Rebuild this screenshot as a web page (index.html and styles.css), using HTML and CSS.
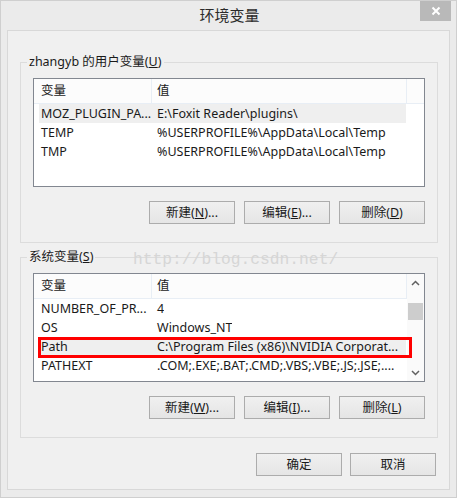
FILE: index.html
```html
<!DOCTYPE html>
<html lang="zh-CN">
<head>
<meta charset="utf-8">
<title>环境变量</title>
<link rel="stylesheet" href="styles.css">
</head>
<body>
<div class="window">
  <div class="titlebar">
    <div class="title">环境变量</div>
    <div class="close">
      <svg width="10" height="10" viewBox="0 0 10 10"><path d="M1.5 1.5 L8.5 8.5 M8.5 1.5 L1.5 8.5" stroke="#fff" stroke-width="2" fill="none"/></svg>
    </div>
  </div>
  <div class="panel">
    <div class="watermark">http://blog.csdn.net/</div>
    <fieldset class="group">
      <legend>zhangyb 的用户变量(<u>U</u>)</legend>
      <div class="list">
        <div class="list-body">
          <div class="list-head">
            <div class="h1">变量</div>
            <div class="h2">值</div>
          </div>
          <div class="row selected"><div class="c1">MOZ_PLUGIN_PA...</div><div class="c2">E:\Foxit Reader\plugins\</div></div>
          <div class="row"><div class="c1">TEMP</div><div class="c2">%USERPROFILE%\AppData\Local\Temp</div></div>
          <div class="row"><div class="c1">TMP</div><div class="c2">%USERPROFILE%\AppData\Local\Temp</div></div>
        </div>
      </div>
      <div class="buttons">
        <button class="btn">新建(<u>N</u>)...</button>
        <button class="btn">编辑(<u>E</u>)...</button>
        <button class="btn">删除(<u>D</u>)</button>
      </div>
    </fieldset>
    <fieldset class="group group2">
      <legend>系统变量(<u>S</u>)</legend>
      <div class="list">
        <div class="list-body">
          <div class="list-head">
            <div class="h1">变量</div>
            <div class="h2">值</div>
          </div>
          <div class="row"><div class="c1">NUMBER_OF_PR...</div><div class="c2">4</div></div>
          <div class="row"><div class="c1">OS</div><div class="c2">Windows_NT</div></div>
          <div class="row selected"><div class="c1">Path</div><div class="c2">C:\Program Files (x86)\NVIDIA Corporat...</div></div>
          <div class="row"><div class="c1">PATHEXT</div><div class="c2">.COM;.EXE;.BAT;.CMD;.VBS;.VBE;.JS;.JSE;....</div></div>
          <div class="highlight-box"></div>
        </div>
        <div class="scrollbar">
          <div class="sb-btn">
            <svg width="9" height="6" viewBox="0 0 9 6"><path d="M1 5 L4.5 1.5 L8 5" stroke="#606060" stroke-width="1.5" fill="none"/></svg>
          </div>
          <div class="sb-track"><div class="sb-thumb"></div></div>
          <div class="sb-btn">
            <svg width="9" height="6" viewBox="0 0 9 6"><path d="M1 1 L4.5 4.5 L8 1" stroke="#606060" stroke-width="1.5" fill="none"/></svg>
          </div>
        </div>
      </div>
      <div class="buttons">
        <button class="btn">新建(<u>W</u>)...</button>
        <button class="btn">编辑(<u>I</u>)...</button>
        <button class="btn">删除(<u>L</u>)</button>
      </div>
    </fieldset>
    <div class="dialog-buttons">
      <button class="btn">确定</button>
      <button class="btn">取消</button>
    </div>
  </div>
</div>
</body>
</html>
```

FILE: styles.css
```css
* { box-sizing: border-box; }

html, body {
  margin: 0;
  padding: 0;
  background: #ebebeb;
}

body {
  font-family: "Noto Sans", "Noto Sans CJK SC", sans-serif;
  font-size: 12.5px;
  color: #1a1a1a;
}

.window {
  width: 457px;
  height: 498px;
  border: 1px solid #cfcfcf;
  background: #ebebeb;
  display: flex;
  flex-direction: column;
}

.titlebar {
  height: 29px;
  display: grid;
  grid-template-columns: 1fr auto 1fr;
  align-items: start;
}

.title {
  grid-column: 2;
  font-family: "Noto Sans CJK SC", sans-serif;
  font-size: 15px;
  line-height: 28px;
  color: #2b2b2b;
  padding-left: 2px;
}

.close {
  grid-column: 3;
  justify-self: end;
  margin-right: 5px;
  width: 31px;
  height: 20px;
  background: #b9b9b9;
  display: flex;
  align-items: center;
  justify-content: center;
}

.panel {
  position: relative;
  margin: 0 6px 7px 6px;
  height: 460px;
  border: 1px solid #d8d8d8;
  background: #f0f0f0;
  display: flex;
  flex-direction: column;
}

.watermark {
  position: absolute;
  left: 125px;
  top: 219px;
  font-family: "Liberation Mono", monospace;
  font-size: 16.3px;
  color: #d6d6d6;
  line-height: 20px;
  pointer-events: none;
}

.group {
  margin: 23px 11px 0 12px;
  padding: 8px 12px 18px 12px;
  border: 1px solid #dcdcdc;
  min-width: 0;
}

.group2 {
  margin-top: 6px;
}

.group legend {
  margin-left: -6px;
  padding: 0 2px;
  font-size: 12.5px;
  line-height: 16px;
  color: #1a1a1a;
}

u { text-decoration: underline; text-underline-offset: 1px; }

.list {
  position: relative;
  height: 109px;
  border: 1px solid #828790;
  background: #fff;
  display: flex;
}

.list-body {
  position: relative;
  flex: 1;
  min-width: 0;
}

.list-head {
  height: 25px;
  display: flex;
  border-bottom: 1px solid #e8eef5;
  background: #fcfcfc;
}

.list-head > div {
  line-height: 24px;
  color: #1a1a1a;
}

.h1 {
  width: 118px;
  padding-left: 7px;
  border-right: 1px solid #e8eef5;
}

.h2 {
  width: 255px;
  padding-left: 5px;
  border-right: 1px solid #e8eef5;
}

.row {
  margin-left: 5px;
  width: 367px;
  height: 19px;
  display: flex;
  line-height: 19px;
  white-space: nowrap;
}

.row.selected {
  background: #efefef;
}

.c1 {
  width: 112px;
  flex: none;
  padding-left: 2px;
  overflow: hidden;
}

.c2 {
  padding-left: 6px;
  overflow: hidden;
}

.highlight-box {
  position: absolute;
  left: 4px;
  top: 63px;
  width: 374px;
  height: 21px;
  border: 3px solid #ff0000;
}

.scrollbar {
  width: 17px;
  display: flex;
  flex-direction: column;
  background: #fafafa;
}

.sb-btn {
  height: 17px;
  display: flex;
  align-items: center;
  justify-content: center;
}

.sb-track {
  flex: 1;
  padding-top: 12px;
  display: flex;
  justify-content: center;
}

.sb-thumb {
  width: 15px;
  height: 17px;
  background: #cdcdcd;
}

.buttons {
  margin-top: 14px;
  display: flex;
  justify-content: flex-end;
  gap: 9px;
}

.btn {
  width: 86px;
  height: 23px;
  padding: 0;
  border: 1px solid #acacac;
  background: linear-gradient(#f0f0f0, #e5e5e5);
  font-family: "Noto Sans", "Noto Sans CJK SC", sans-serif;
  font-size: 12.5px;
  line-height: 20px;
  color: #1a1a1a;
}

.dialog-buttons {
  margin: 15px 13px 0 0;
  display: flex;
  justify-content: flex-end;
  gap: 8px;
}
```
